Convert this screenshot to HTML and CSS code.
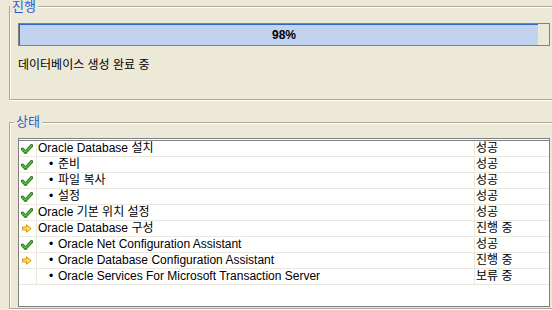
FILE: index.html
```html
<!DOCTYPE html>
<html lang="ko">
<head>
  <meta charset="UTF-8">
  <title>진행 상태</title>
  <link rel="stylesheet" href="styles.css">
</head>
<body>
  <svg class="defs" width="0" height="0">
    <symbol id="ok" viewBox="0 0 12 10">
      <path d="M1.5 5.2 L4.6 8.3 L10.6 1.6" fill="none" stroke="#25701A" stroke-width="3.2" stroke-linecap="round" stroke-linejoin="round"/>
      <path d="M1.6 5.2 L4.6 8.1 L10.5 1.7" fill="none" stroke="#5ACB3E" stroke-width="1.4" stroke-linecap="round" stroke-linejoin="round"/>
    </symbol>
    <symbol id="run" viewBox="0 0 10 9">
      <path d="M0.5 3 H4.5 V0.7 L9.2 4.5 L4.5 8.3 V6 H0.5 Z" fill="#FFDC4E" stroke="#D9941A" stroke-width="1" stroke-linejoin="round"/>
    </symbol>
  </svg>

  <div class="group group-progress">
    <span class="legend">진행</span>
    <div class="bar">
      <div class="bar-fill" style="width: 98%"></div>
      <div class="bar-label">98%</div>
    </div>
    <p class="status-text">데이터베이스 생성 완료 중</p>
  </div>

  <div class="group group-status">
    <span class="legend legend-status">상태</span>
    <div class="list">
      <div class="row"><div class="c-icon"><svg class="i-ok"><use href="#ok"/></svg></div><div class="c-name">Oracle Database 설치</div><div class="c-state">성공</div></div>
      <div class="row"><div class="c-icon"><svg class="i-ok"><use href="#ok"/></svg></div><div class="c-name sub">준비</div><div class="c-state">성공</div></div>
      <div class="row"><div class="c-icon"><svg class="i-ok"><use href="#ok"/></svg></div><div class="c-name sub">파일 복사</div><div class="c-state">성공</div></div>
      <div class="row"><div class="c-icon"><svg class="i-ok"><use href="#ok"/></svg></div><div class="c-name sub">설정</div><div class="c-state">성공</div></div>
      <div class="row"><div class="c-icon"><svg class="i-ok"><use href="#ok"/></svg></div><div class="c-name">Oracle 기본 위치 설정</div><div class="c-state">성공</div></div>
      <div class="row"><div class="c-icon"><svg class="i-run"><use href="#run"/></svg></div><div class="c-name">Oracle Database 구성</div><div class="c-state">진행 중</div></div>
      <div class="row"><div class="c-icon"><svg class="i-ok"><use href="#ok"/></svg></div><div class="c-name sub">Oracle Net Configuration Assistant</div><div class="c-state">성공</div></div>
      <div class="row"><div class="c-icon"><svg class="i-run"><use href="#run"/></svg></div><div class="c-name sub">Oracle Database Configuration Assistant</div><div class="c-state">진행 중</div></div>
      <div class="row"><div class="c-icon"></div><div class="c-name sub">Oracle Services For Microsoft Transaction Server</div><div class="c-state">보류 중</div></div>
    </div>
  </div>
</body>
</html>
```

FILE: styles.css
```css
html, body { margin: 0; padding: 0; }
body { width: 552px; height: 310px; overflow: hidden; background: #ECE9D8; font-family: "Liberation Sans", "Noto Sans CJK KR", sans-serif; font-size: 12px; color: #000; }
.defs { position: absolute; width: 0; height: 0; }

/* group boxes run off the right edge of the window, so no right border */
.group { position: relative; border: 1px solid #ACA899; border-right: none; box-shadow: inset 1px 1px 0 #fff, 0 1px 0 #fff; }
.legend { position: absolute; top: -7px; left: 0; padding: 0 2px; background: #ECE9D8; color: #1F5BD6; font-size: 13px; line-height: 13px; }
.legend-status { left: 4px; top: -8px; }

.group-progress { margin: 6px 0 0 9px; height: 94px; box-sizing: border-box; padding: 16px 0 0 8px; }
.bar { display: grid; width: 532px; height: 23px; box-sizing: border-box; border: 1px solid #808080; background: #ECE9D8; }
.bar-fill, .bar-label { grid-area: 1 / 1; }
.bar-fill { box-sizing: border-box; background: #C1D3EE; border-top: 1px solid #316AC5; border-left: 1px solid #316AC5; }
.bar-label { justify-self: center; align-self: center; font-weight: bold; font-size: 12px; line-height: 14px; }
.status-text { margin: 12px 0 0; line-height: 15px; }

.group-status { margin: 22px 0 0 9px; height: 187px; box-sizing: border-box; padding: 15px 0 0 8px; }
.list { width: 532px; height: 169px; box-sizing: border-box; background: #fff; border: 1px solid #808080; border-top: 3px double #808080; }
.row { display: grid; grid-template-columns: 18px 438px 1fr; height: 16px; }
.row > div { box-sizing: border-box; height: 16px; border-bottom: 1px solid #EBE9DD; line-height: 15px; white-space: nowrap; overflow: hidden; }
.c-icon, .c-name { border-right: 1px solid #EBE9DD; }
.c-icon { display: flex; align-items: center; padding-left: 2px; }
.c-name { padding-left: 1px; }
.c-name.sub { padding-left: 12px; }
.c-name.sub::before { content: "•"; display: inline-block; width: 9px; }
.c-state { padding-left: 1px; }
.i-ok { width: 12px; height: 10px; }
.i-run { width: 10px; height: 9px; margin-left: 1px; }
```
